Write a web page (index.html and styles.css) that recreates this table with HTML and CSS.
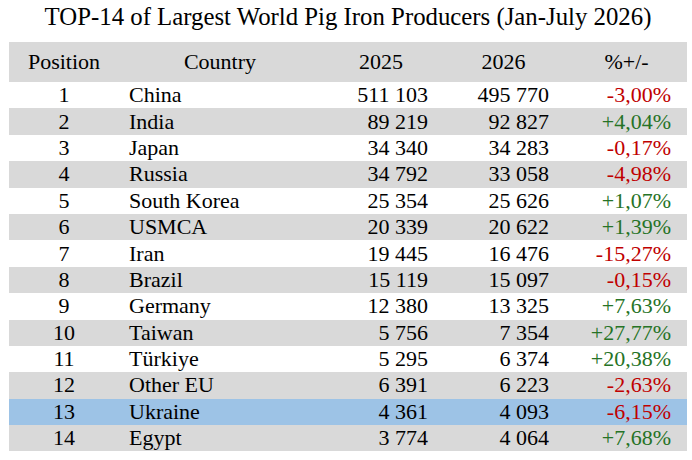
FILE: index.html
```html
<!DOCTYPE html>
<html>
<head>
<meta charset="utf-8">
<link rel="stylesheet" href="styles.css">
</head>
<body>
<div class="page">
  <h1 class="title">TOP-14 of Largest World Pig Iron Producers (Jan-July 2026)</h1>
  <table class="tbl">
    <colgroup>
      <col class="c-pos"><col class="c-country"><col class="c-y1"><col class="c-y2"><col class="c-pct">
    </colgroup>
    <thead>
      <tr class="gray"><th>Position</th><th>Country</th><th>2025</th><th>2026</th><th>%+/-</th></tr>
    </thead>
    <tbody>
      <tr><td class="pos">1</td><td class="cty">China</td><td class="n1">511 103</td><td class="n2">495 770</td><td class="pct neg">-3,00%</td></tr>
      <tr class="gray"><td class="pos">2</td><td class="cty">India</td><td class="n1">89 219</td><td class="n2">92 827</td><td class="pct pos-c">+4,04%</td></tr>
      <tr><td class="pos">3</td><td class="cty">Japan</td><td class="n1">34 340</td><td class="n2">34 283</td><td class="pct neg">-0,17%</td></tr>
      <tr class="gray"><td class="pos">4</td><td class="cty">Russia</td><td class="n1">34 792</td><td class="n2">33 058</td><td class="pct neg">-4,98%</td></tr>
      <tr><td class="pos">5</td><td class="cty">South Korea</td><td class="n1">25 354</td><td class="n2">25 626</td><td class="pct pos-c">+1,07%</td></tr>
      <tr class="gray"><td class="pos">6</td><td class="cty">USMCA</td><td class="n1">20 339</td><td class="n2">20 622</td><td class="pct pos-c">+1,39%</td></tr>
      <tr><td class="pos">7</td><td class="cty">Iran</td><td class="n1">19 445</td><td class="n2">16 476</td><td class="pct neg">-15,27%</td></tr>
      <tr class="gray"><td class="pos">8</td><td class="cty">Brazil</td><td class="n1">15 119</td><td class="n2">15 097</td><td class="pct neg">-0,15%</td></tr>
      <tr><td class="pos">9</td><td class="cty">Germany</td><td class="n1">12 380</td><td class="n2">13 325</td><td class="pct pos-c">+7,63%</td></tr>
      <tr class="gray"><td class="pos">10</td><td class="cty">Taiwan</td><td class="n1">5 756</td><td class="n2">7 354</td><td class="pct pos-c">+27,77%</td></tr>
      <tr><td class="pos">11</td><td class="cty">Türkiye</td><td class="n1">5 295</td><td class="n2">6 374</td><td class="pct pos-c">+20,38%</td></tr>
      <tr class="gray"><td class="pos">12</td><td class="cty">Other EU</td><td class="n1">6 391</td><td class="n2">6 223</td><td class="pct neg">-2,63%</td></tr>
      <tr class="blue"><td class="pos">13</td><td class="cty">Ukraine</td><td class="n1">4 361</td><td class="n2">4 093</td><td class="pct neg">-6,15%</td></tr>
      <tr class="gray"><td class="pos">14</td><td class="cty">Egypt</td><td class="n1">3 774</td><td class="n2">4 064</td><td class="pct pos-c">+7,68%</td></tr>
    </tbody>
  </table>
</div>
</body>
</html>
```

FILE: styles.css
```css
html, body {
  margin: 0;
  padding: 0;
  background: #ffffff;
}
.page {
  width: 692px;
  height: 460px;
  font-family: "Liberation Serif", "Times New Roman", serif;
  color: #000;
  padding-left: 9px;
  box-sizing: border-box;
}
.title {
  margin: 0;
  width: 678px;
  height: 42px;
  line-height: 34px;
  font-size: 24.8px;
  font-weight: normal;
  text-align: center;
}
.tbl {
  border-collapse: collapse;
  border-spacing: 0;
  table-layout: fixed;
  width: 678px;
  font-size: 22px;
}
.c-pos { width: 110px; }
.c-country { width: 202px; }
.c-y1 { width: 120px; }
.c-y2 { width: 125px; }
.c-pct { width: 121px; }
.tbl th {
  font-weight: normal;
  height: 40px;
  padding: 0;
  text-align: center;
  vertical-align: middle;
}
.tbl td {
  height: 26.4px;
  padding: 0;
  line-height: 24px;
  vertical-align: middle;
  white-space: nowrap;
}
.gray { background: #d9d9d9; }
.blue { background: #9dc3e6; }
.pos { text-align: center; }
.cty { text-align: left; padding-left: 10px !important; }
.n1 { text-align: right; padding-right: 13px !important; }
.n2 { text-align: right; padding-right: 17px !important; }
.pct { text-align: right; padding-right: 16px !important; }
.neg { color: #c00000; }
.pos-c { color: #267326; }
```
